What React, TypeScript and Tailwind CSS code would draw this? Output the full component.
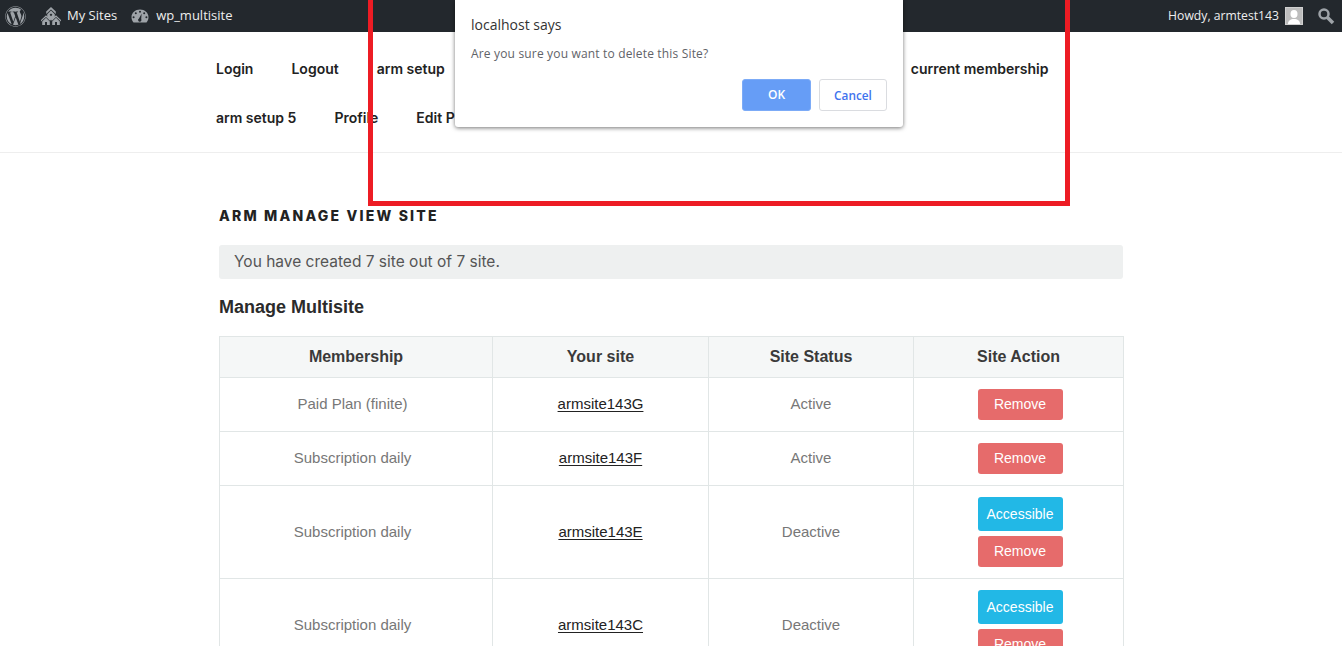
import React from "react";
import { FaWordpress } from "react-icons/fa";

const rows = [
  { m: "Paid Plan (finite)", s: "armsite143G", st: "Active", acc: false, h: "h-[54px]" },
  { m: "Subscription daily", s: "armsite143F", st: "Active", acc: false, h: "h-[54px]" },
  { m: "Subscription daily", s: "armsite143E", st: "Deactive", acc: true, h: "h-[93px]" },
  { m: "Subscription daily", s: "armsite143C", st: "Deactive", acc: true, h: "h-[93px]" },
];

function Btn({ c, children }: { c: string; children: React.ReactNode }) {
  return (
    <div className={`w-[85px] rounded-[3px] text-white text-[14px] text-center ${c}`}>{children}</div>
  );
}

const NavItem = ({ children }: { children: React.ReactNode }) => (
  <a className="h-[49px] leading-[49px] mr-[38px] text-[14px] font-semibold text-[#222] whitespace-nowrap">{children}</a>
);

export default function App() {
  return (
    <div className="relative h-[646px] w-full overflow-hidden bg-white font-['Liberation_Sans',sans-serif]">
      <div className="h-8 bg-[#23282d] flex items-center justify-between text-[13px] text-[#eee] font-['Open_Sans',sans-serif]">
        <div className="flex items-center">
          <FaWordpress className="ml-[5px] text-[#9ea3a8]" size={21} />
          <svg className="ml-[15px]" width="20" height="20" viewBox="0 0 20 20" fill="#9ea3a8">
            <path fillRule="evenodd" d="M10 1 14.800 5.600V8L10 3.400 5.200 8V5.600zM10 4.600 13.800 8.200V11.400L10 14.500 6.200 11.400V8.200zM10 7.400 8.600 8.800 10 10.200 11.400 8.800z" />
            <path d="M5 9.200 0 14v1.500L5 10.900 9.200 15V13.300zM15 9.200 20 14v1.500L15 10.900 10.800 15V13.300z" />
            <path d="M5 11.800 1.200 15.400V19H4V16h2v3h2.800V15.400zM15 11.800 11.200 15.400V19H14V16h2v3h2.800V15.400z" />
          </svg>
          <span className="ml-[6px]">My Sites</span>
          <svg className="ml-[13px]" width="20" height="20" viewBox="0 0 20 20">
            <path fill="#9ea3a8" fillRule="evenodd" d="M3.500 16.500C2.200 15 1.500 13 1.500 11.200 1.500 6.800 5.300 3.500 10 3.500s8.500 3.300 8.500 7.700c0 1.800-.7 3.800-2 5.300zM10 4.700a1 1 0 1 0 0 2 1 1 0 0 0 0-2zM5.800 6.300a1 1 0 1 0 0 2 1 1 0 0 0 0-2zM14.200 6.300a1 1 0 1 0 0 2 1 1 0 0 0 0-2zM3.600 10.200a1 1 0 1 0 0 2 1 1 0 0 0 0-2zM16.400 10.200a1 1 0 1 0 0 2 1 1 0 0 0 0-2zM11.600 7.800 9 12.400a1.700 1.700 0 1 0 2.200.6z" />
          </svg>
          <span className="ml-[6px]">wp_multisite</span>
        </div>
        <div className="flex items-center">
          <span className="text-[12.2px]">Howdy, armtest143</span>
          <div className="ml-[6px] w-[18px] h-[18px] bg-[#bdbdbd] border border-[#d0d0d0] overflow-hidden">
            <svg width="16" height="16" viewBox="0 0 16 16" fill="#fff">
              <ellipse cx="8" cy="6" rx="3.500" ry="4" />
              <path d="M2 16c0-3.500 2.500-5 6-5s6 1.500 6 5z" />
            </svg>
          </div>
          <svg className="ml-[15px] mr-[6px]" width="18" height="18" viewBox="0 0 18 18" fill="none" stroke="#9ea3a8">
            <circle cx="6" cy="7" r="4.500" strokeWidth="2.500" />
            <path d="M9.500 10.500 15 16" strokeWidth="3.500" />
          </svg>
        </div>
      </div>

      <nav className="h-[121px] border-b border-[#eee] pt-[12px] pl-[216px] font-['Inter',sans-serif]">
        <div className="flex">
          <NavItem>Login</NavItem>
          <NavItem>Logout</NavItem>
          <NavItem>arm setup</NavItem>
          <div className="w-[390px] mr-[38px]" />
          <NavItem>current membership</NavItem>
        </div>
        <div className="flex">
          <NavItem>arm setup 5</NavItem>
          <NavItem>Profile</NavItem>
          <NavItem>Edit Profile</NavItem>
        </div>
      </nav>

      <main className="ml-[219px] w-[904px]">
        <h2 className="mt-[53px] text-[14px] leading-[20px] font-extrabold tracking-[2.2px] text-[#222] font-['Inter',sans-serif]">
          ARM MANAGE VIEW SITE
        </h2>
        <div className="mt-[19px] h-[34px] leading-[33px] rounded-[3px] bg-[#eef0f0] pl-[15px] text-[15.5px] text-[#555] font-['Inter',sans-serif]">
          You have created 7 site out of 7 site.
        </div>
        <h3 className="mt-[16px] text-[18px] leading-[24px] font-bold text-[#2b2b2b]">Manage Multisite</h3>
        <table className="mt-[17px] w-[904px] table-fixed border-collapse text-[15px] text-[#777] text-center">
          <colgroup>
            <col className="w-[273px]" />
            <col className="w-[216px]" />
            <col className="w-[205px]" />
            <col className="w-[210px]" />
          </colgroup>
          <thead>
            <tr className="h-[41px] bg-[#f5f7f7] text-[16px] text-[#3a3a3a]">
              {["Membership", "Your site", "Site Status", "Site Action"].map((t) => (
                <th key={t} className="border border-[#e1e6e6] font-bold">{t}</th>
              ))}
            </tr>
          </thead>
          <tbody>
            {rows.map((r) => (
              <tr key={r.s} className={r.h}>
                <td className="border border-[#e1e6e6] p-0 pr-[7px]">{r.m}</td>
                <td className="border border-[#e1e6e6] p-0">
                  <a className="text-[#222] underline underline-offset-2">{r.s}</a>
                </td>
                <td className="border border-[#e1e6e6] p-0">{r.st}</td>
                <td className="border border-[#e1e6e6] p-0">
                  <div className="flex flex-col items-center gap-[5px] pl-[3px]">
                    {r.acc && <Btn c="bg-[#22b8e6] h-[34px] leading-[34px]">Accessible</Btn>}
                    <Btn c="bg-[#e66b6b] h-[31px] leading-[31px]">Remove</Btn>
                  </div>
                </td>
              </tr>
            ))}
          </tbody>
        </table>
      </main>

      <div className="absolute left-[368px] top-[-10px] w-[702px] h-[216px] border-[5px] border-[#ed1c24]" />

      <div className="absolute left-[455px] top-0 w-[448px] h-[127px] bg-white rounded-b-[3px] shadow-[0_1px_4px_rgba(0,0,0,0.55)] font-['Open_Sans',sans-serif]">
        <div className="pl-[16px] pt-[15px] text-[14px] leading-[19px] text-[#333]">localhost says</div>
        <div className="pl-[16px] pt-[11px] text-[12px] tracking-[0.17px] leading-[17px] text-[#5f6368]">Are you sure you want to delete this Site?</div>
        <div className="absolute right-[16px] top-[79px] flex gap-[8px]">
          <div className="w-[69px] h-[32px] leading-[30px] text-center rounded-[3px] bg-[#669df6] border border-[#7cabf7] text-white text-[12px] font-semibold">OK</div>
          <div className="w-[68px] h-[32px] leading-[30px] text-center rounded-[3px] border border-[#dadce0] text-[#3f73ee] text-[11.8px] font-semibold">Cancel</div>
        </div>
      </div>
    </div>
  );
}
